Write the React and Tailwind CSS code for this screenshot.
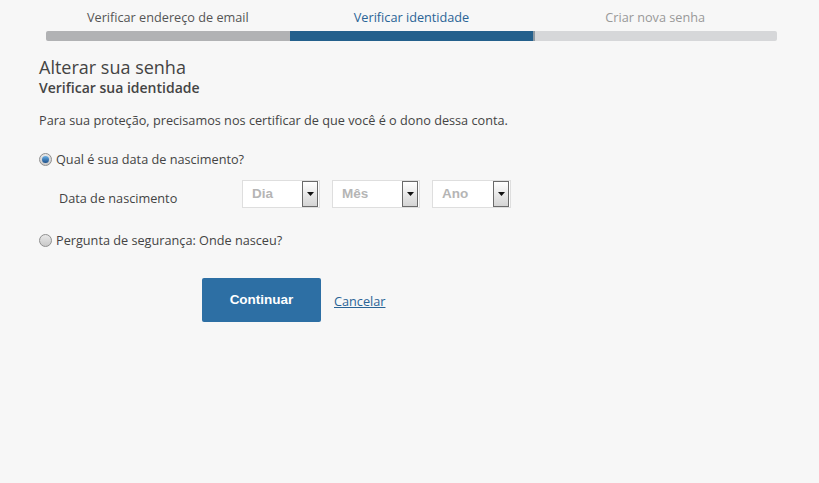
import { useState } from 'react';

const steps = [
    { label: 'Verificar endereço de email', text: 'text-[#555]', bar: 'bg-[#b1b2b4] rounded-l-[2px]' },
    { label: 'Verificar identidade', text: 'text-[#2a6496]', bar: 'bg-[#24608c]' },
    { label: 'Criar nova senha', text: 'text-[#999]', bar: 'bg-[#d6d7d9] rounded-r-[2px] border-l-2 border-[#8e9aa3]' },
];

function Radio({ checked, onClick }) {
    return (
        <span
            onClick={onClick}
            className="flex h-[13px] w-[13px] items-center justify-center rounded-full border border-[#8f8f8f] bg-gradient-to-b from-[#e8e8e8] to-[#c9c9c9]"
        >
            {checked && (
                <span className="h-[7px] w-[7px] rounded-full bg-gradient-to-b from-[#6ab0e6] to-[#1b4f8a]" />
            )}
        </span>
    );
}

function DateSelect({ label, width }) {
    return (
        <div className={`flex h-[28px] ${width} items-center border border-[#dedede] bg-white pl-[9px]`}>
            <span className="flex-1 text-[13.5px] font-bold text-[#b5b5b5] [font-family:'Liberation_Sans',sans-serif]">{label}</span>
            <span className="mr-[1px] flex h-[26px] w-[16px] items-center justify-center border border-[#6a6a6a] bg-gradient-to-b from-white to-[#d4d4d4]">
                <svg width="7" height="4" viewBox="0 0 7 4">
                    <path d="M0 0h7L3.5 4z" fill="#111" />
                </svg>
            </span>
        </div>
    );
}

export default function App() {
    const [option, setOption] = useState('birth');

    return (
        <div className="h-[483px] w-full bg-[#f7f7f7] text-[#444] [font-family:'Open_Sans',sans-serif]">
            <div className="ml-[46px] mr-[42px] flex pt-[7px]">
                {steps.map((s) => (
                    <div key={s.label} className="flex flex-1 flex-col">
                        <div className={`h-[24px] text-center text-[12.7px] leading-[20px] ${s.text}`}>{s.label}</div>
                        <div className={`h-[10px] ${s.bar}`} />
                    </div>
                ))}
            </div>

            <div className="pl-[39px] pt-[14px]">
                <h1 className="text-[18px] leading-[24px] text-[#444]">Alterar sua senha</h1>
                <h2 className="text-[14px] font-semibold leading-[18px] text-[#444]">Verificar sua identidade</h2>

                <p className="mt-[13px] text-[12.7px] leading-[20px] text-[#444]">
                    Para sua proteção, precisamos nos certificar de que você é o dono dessa conta.
                </p>

                <label className="mt-[19px] flex items-center gap-[4px] text-[12.7px] leading-[20px]">
                    <Radio checked={option === 'birth'} onClick={() => setOption('birth')} />
                    Qual é sua data de nascimento?
                </label>

                <div className="mt-[11px] flex items-center">
                    <span className="w-[203px] pl-[20px] pt-[9px] text-[12.7px]">Data de nascimento</span>
                    <div className="flex gap-[12px]">
                        <DateSelect label="Dia" width="w-[78px]" />
                        <DateSelect label="Mês" width="w-[88px]" />
                        <DateSelect label="Ano" width="w-[79px]" />
                    </div>
                </div>

                <label className="mt-[22px] flex items-center gap-[4px] text-[12.7px] leading-[20px]">
                    <Radio checked={option === 'question'} onClick={() => setOption('question')} />
                    Pergunta de segurança: Onde nasceu?
                </label>

                <div className="ml-[163px] mt-[28px] flex items-center gap-[13px]">
                    <button className="h-[44px] w-[119px] rounded-[2px] bg-[#2d6fa4] text-[13.5px] font-bold text-white [font-family:'Liberation_Sans',sans-serif]">
                        Continuar
                    </button>
                    <a href="#" className="pt-[3px] text-[12.7px] text-[#2a6496] underline">Cancelar</a>
                </div>
            </div>
        </div>
    );
}
